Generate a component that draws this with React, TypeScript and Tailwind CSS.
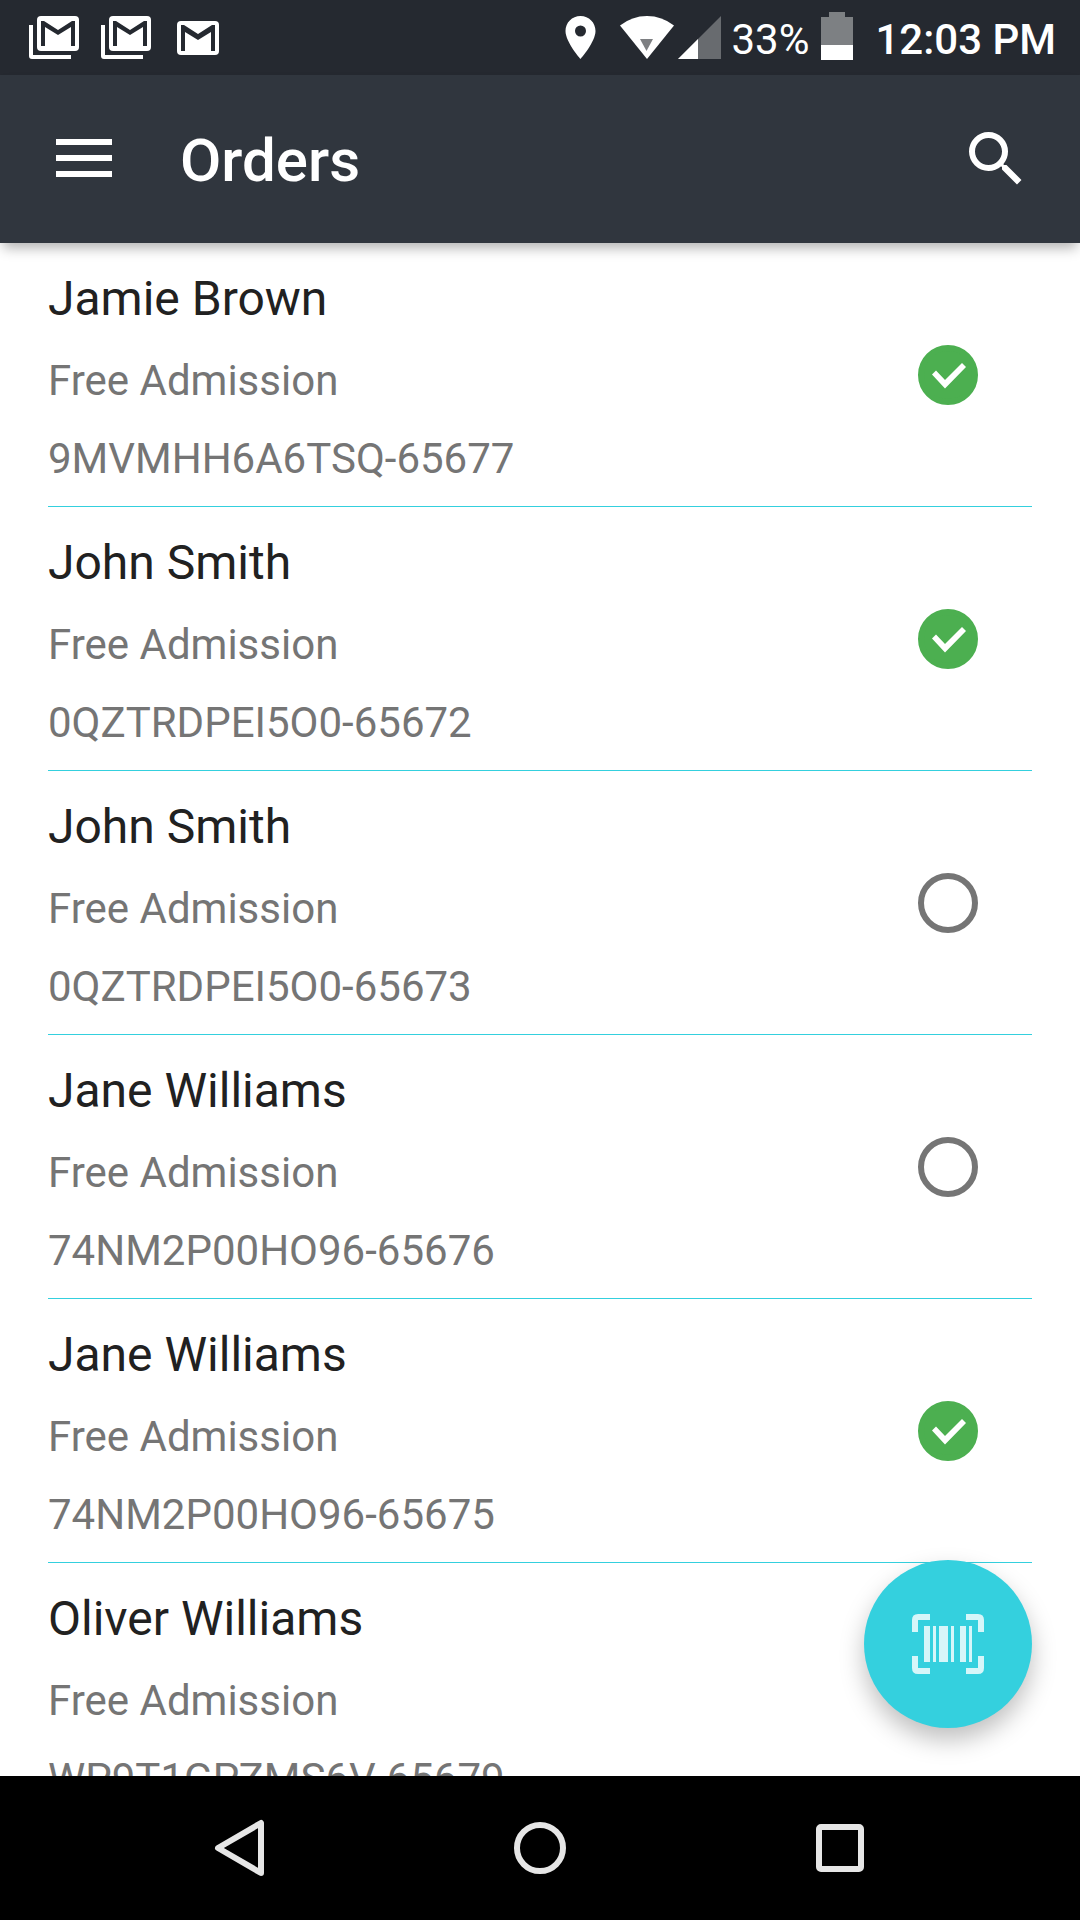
import React, { useState } from 'react';

interface Order {
  name: string;
  ticket: string;
  code: string;
  checkedIn: boolean;
}

const INITIAL_ORDERS: Order[] = [
  { name: 'Jamie Brown', ticket: 'Free Admission', code: '9MVMHH6A6TSQ-65677', checkedIn: true },
  { name: 'John Smith', ticket: 'Free Admission', code: '0QZTRDPEI5O0-65672', checkedIn: true },
  { name: 'John Smith', ticket: 'Free Admission', code: '0QZTRDPEI5O0-65673', checkedIn: false },
  { name: 'Jane Williams', ticket: 'Free Admission', code: '74NM2P00HO96-65676', checkedIn: false },
  { name: 'Jane Williams', ticket: 'Free Admission', code: '74NM2P00HO96-65675', checkedIn: true },
  { name: 'Oliver Williams', ticket: 'Free Admission', code: 'WP9T1GPZMS6V-65679', checkedIn: false },
];

function GmailIcon({ stacked = false }: { stacked?: boolean }) {
  if (stacked) {
    return (
      <svg viewBox="0 0 72 75" className="h-[75px] w-[72px]" aria-hidden="true">
        <path d="M11 25h4v30h38v4H14q-3 0-3-3z" fill="#fff" />
        <rect x="19" y="16" width="42" height="35" rx="4" fill="#fff" />
        <path d="M23 46V21h3l14 9 14-9h3v25h-4V27l-13 8-13-8v19z" fill="#252930" />
      </svg>
    );
  }
  return (
    <svg viewBox="0 0 72 75" className="h-[75px] w-[72px]" aria-hidden="true">
      <rect x="15" y="21" width="42" height="34" rx="4" fill="#fff" />
      <path d="M19 51V25h3l14 9 14-9h3v26h-4V32l-13 8-13-8v19z" fill="#252930" />
    </svg>
  );
}

function StatusBar() {
  return (
    <div className="flex h-[75px] shrink-0 items-center justify-between bg-[#252930] pl-[18px] pr-6 text-[42px] leading-none text-white">
      <div className="flex">
        <GmailIcon stacked />
        <GmailIcon stacked />
        <GmailIcon />
      </div>
      <div className="flex items-center">
        <svg viewBox="0 0 31 75" className="mr-6 h-[75px] w-[31px]" aria-hidden="true">
          <path
            d="M15.500 16C7 16 .5 22.700.5 31c0 11 15 28 15 28s15-17 15-28c0-8.300-6.500-15-15-15zm0 20.500a5.500 5.500 0 1 1 0-11 5.500 5.500 0 0 1 0 11z"
            fill="#fff"
          />
        </svg>
        <svg viewBox="0 0 54 75" className="mr-1 h-[75px] w-[54px]" aria-hidden="true">
          <path d="M0 25.500Q12 16 27 16t27 9.500L27 59z" fill="#fff" />
          <path d="M20 39h13l-6.500 12z" fill="#7d7f82" />
        </svg>
        <svg viewBox="0 0 43 75" className="mr-2.5 h-[75px] w-[43px]" aria-hidden="true">
          <path d="M0 59 43 16v43z" fill="#686b6f" />
          <path d="M0 59 20 39v20z" fill="#fff" />
        </svg>
        <span className="pt-1">33%</span>
        <svg viewBox="0 0 32 75" className="ml-3 mr-[22px] h-[75px] w-8" aria-hidden="true">
          <path d="M8 12h16v5h8v29H0V17h8z" fill="#7d8083" />
          <path d="M0 45h32v15H0z" fill="#fff" />
        </svg>
        <span className="pt-1 font-medium">12:03 PM</span>
      </div>
    </div>
  );
}

function AppBar() {
  return (
    <header className="z-10 flex h-[168px] shrink-0 items-center bg-[#30363e] px-12 text-white shadow-[0_8px_12px_-3px_rgba(0,0,0,0.3)]">
      <button type="button" aria-label="Open menu" className="flex size-[72px] items-center justify-center pb-0.5">
        <svg viewBox="0 0 56 38" className="h-[38px] w-14" aria-hidden="true">
          <path d="M0 0h56v6H0zM0 16h56v6H0zM0 32h56v6H0z" fill="currentColor" />
        </svg>
      </button>
      <h1 className="ml-[60px] flex-1 pt-1 text-[60px] font-medium leading-[72px]">Orders</h1>
      <button type="button" aria-label="Search" className="size-[72px]">
        <svg viewBox="0 0 24 24" className="size-[72px]" aria-hidden="true">
          <path
            d="M15.500 14h-.79l-.28-.27A6.471 6.471 0 0 0 16 9.500 6.500 6.500 0 1 0 9.500 16c1.610 0 3.090-.59 4.230-1.570l.27.28v.79l5 4.990L20.490 19l-4.990-5zm-6 0C7.010 14 5 11.990 5 9.500S7.010 5 9.500 5 14 7.010 14 9.500 11.990 14 9.500 14z"
            fill="currentColor"
          />
        </svg>
      </button>
    </header>
  );
}

function OrderRow({ order, onToggle }: { order: Order; onToggle: () => void }) {
  return (
    <li className="flex items-center justify-between border-b border-[#34d0de]">
      <div className="flex flex-col gap-[29px] pb-[23px] pt-7 text-[42px] leading-[49px] text-[#757575]">
        <h2 className="text-5xl leading-[56px] text-[#212121]">{order.name}</h2>
        <p>{order.ticket}</p>
        <p>{order.code}</p>
      </div>
      <label className="relative mr-[54px] block size-[60px]">
        <input
          type="checkbox"
          checked={order.checkedIn}
          onChange={onToggle}
          aria-label={`Check in ${order.name}, ${order.code}`}
          className="peer block size-[60px] appearance-none rounded-full border-[6px] border-[#757575] checked:border-[#4caf50] checked:bg-[#4caf50]"
        />
        <svg
          viewBox="0 0 60 60"
          className="pointer-events-none invisible absolute inset-0 size-[60px] peer-checked:visible"
          aria-hidden="true"
        >
          <path d="M14 29.500l4-4 9 9.500L44 18l4 4-21 21.500z" fill="#fff" />
        </svg>
      </label>
    </li>
  );
}

function ScanButton() {
  return (
    <button
      type="button"
      aria-label="Scan barcode"
      className="absolute bottom-12 right-12 flex size-[168px] items-center justify-center rounded-full bg-[#34d0de] shadow-[0_12px_24px_rgba(0,0,0,0.25)]"
    >
      <svg viewBox="0 0 72 60" className="h-[60px] w-[72px]" fill="#d6f6f9" aria-hidden="true">
        <path d="M0 18V6q0-6 6-6h12v6H6v12zM54 0h12q6 0 6 6v12h-6V6H54zM0 42h6v12h12v6H6q-6 0-6-6zM66 42h6v12q0 6-6 6H54v-6h12z" />
        <path d="M12 12h6v36h-6zM21 12h3v36h-3zM27 12h9v36h-9zM39 12h3v36h-3zM48 12h6v36h-6zM57 12h3v36h-3z" />
      </svg>
    </button>
  );
}

function NavBar() {
  const button = 'flex h-full w-36 items-center justify-center';
  return (
    <nav aria-label="System" className="flex h-36 shrink-0 items-center justify-between bg-black px-[168px]">
      <button type="button" aria-label="Back" className={button}>
        <svg viewBox="0 0 72 72" className="size-[72px]" fill="none" stroke="#e6e6e6" strokeWidth="6" strokeLinejoin="round" aria-hidden="true">
          <path d="M57 11v50L14 36z" />
        </svg>
      </button>
      <button type="button" aria-label="Home" className={button}>
        <svg viewBox="0 0 72 72" className="size-[72px]" fill="none" stroke="#e6e6e6" strokeWidth="6" aria-hidden="true">
          <circle cx="36" cy="36" r="23" />
        </svg>
      </button>
      <button type="button" aria-label="Recent apps" className={button}>
        <svg viewBox="0 0 72 72" className="size-[72px]" fill="none" stroke="#e6e6e6" strokeWidth="6" aria-hidden="true">
          <rect x="15" y="15" width="42" height="42" rx="2" />
        </svg>
      </button>
    </nav>
  );
}

export default function App() {
  const [orders, setOrders] = useState(INITIAL_ORDERS);

  const toggle = (code: string) =>
    setOrders((prev) => prev.map((o) => (o.code === code ? { ...o, checkedIn: !o.checkedIn } : o)));

  return (
    <div className="flex h-screen flex-col bg-white font-[Roboto,sans-serif]">
      <StatusBar />
      <AppBar />
      {/* the list scrolls under the scan button, which stays put */}
      <main className="relative min-h-0 flex-1">
        <ul className="h-full overflow-y-auto px-12 [scrollbar-width:none]">
          {orders.map((order) => (
            <OrderRow key={order.code} order={order} onToggle={() => toggle(order.code)} />
          ))}
        </ul>
        <ScanButton />
      </main>
      <NavBar />
    </div>
  );
}
